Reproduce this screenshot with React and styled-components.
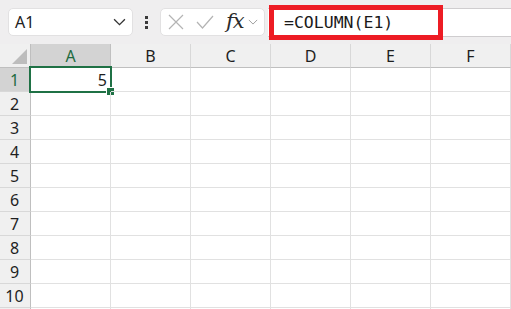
import React from 'react';
import styled, { createGlobalStyle } from 'styled-components';

const GlobalStyle = createGlobalStyle`
  * { box-sizing: border-box; }
  body {
    margin: 0;
    background: #fff;
    font-family: 'Noto Sans', 'Open Sans', sans-serif;
    overflow: hidden;
  }
`;

const Page = styled.div`
  width: 511px;
  height: 309px;
  overflow: hidden;
  display: flex;
  flex-direction: column;
`;

const Toolbar = styled.div`
  height: 44px;
  flex: none;
  background: #efeeef;
  display: flex;
  align-items: center;
  padding-left: 8px;
`;

const NameBox = styled.div`
  width: 125px;
  height: 28px;
  background: #fff;
  border: 1px solid #e2e1e2;
  border-radius: 5px;
  display: flex;
  align-items: center;
  justify-content: space-between;
  padding: 0 6px 0 6px;
  font-size: 16px;
  color: #222;
`;

const Grip = styled.div`
  width: 27px;
  display: flex;
  flex-direction: column;
  align-items: center;
  gap: 2px;
  span {
    width: 3px;
    height: 3px;
    background: #3a3a3a;
  }
`;

const FnBox = styled.div`
  width: 105px;
  height: 28px;
  background: #fff;
  border: 1px solid #e2e1e2;
  border-radius: 5px;
  display: flex;
  align-items: center;
  padding-left: 6px;
`;

const FxLabel = styled.span`
  font-family: 'DejaVu Serif', 'Liberation Serif', serif;
  font-style: italic;
  font-size: 21px;
  color: #2b2b2b;
  margin: 0 4px 2px 11px;
  line-height: 1;
  letter-spacing: -1px;
`;

const FormulaBar = styled.div`
  flex: 1;
  height: 29px;
  margin-left: 3px;
  background: #fff;
  border-top: 1px solid #cfcdcf;
  border-bottom: 1px solid #cfcdcf;
  display: flex;
  align-items: stretch;
`;

const FormulaFrame = styled.div`
  width: 174px;
  margin: -4px 0 -4px 1px;
  border: 5px solid #ed1c24;
  display: flex;
  align-items: center;
  padding-left: 10px;
  font-family: 'DejaVu Sans Mono', 'Liberation Mono', monospace;
  font-size: 16.5px;
  color: #1a1a1a;
`;

const Sheet = styled.div`
  display: grid;
  grid-template-columns: 31px repeat(6, 80px);
  grid-auto-rows: 24px;
  font-size: 16px;
  color: #1e1e1e;
`;

const Corner = styled.div`
  background: #f0f0f0;
  border-right: 1px solid #bfbfbf;
  border-bottom: 1px solid #bfbfbf;
  position: relative;
  &::after {
    content: '';
    position: absolute;
    right: 3px;
    bottom: 3px;
    width: 15px;
    height: 15px;
    background: #bdbdbd;
    clip-path: polygon(100% 0, 100% 100%, 0 100%);
  }
`;

const ColHead = styled.div`
  background: ${(p) => (p.$active ? '#d3d3d3' : '#f0f0f0')};
  color: ${(p) => (p.$active ? '#1d6b40' : '#1e1e1e')};
  border-right: 1px solid ${(p) => (p.$active ? '#c0c0c0' : '#d8d8d8')};
  border-bottom: 1px solid #bfbfbf;
  display: flex;
  align-items: center;
  justify-content: center;
`;

const RowHead = styled.div`
  background: ${(p) => (p.$active ? '#d3d3d3' : '#f0f0f0')};
  color: ${(p) => (p.$active ? '#1d6b40' : '#1e1e1e')};
  border-right: 1px solid #bfbfbf;
  border-bottom: 1px solid #d8d8d8;
  display: flex;
  align-items: center;
  justify-content: center;
  padding-right: 1px;
`;

const Cell = styled.div`
  border-right: 1px solid #e1e1e1;
  border-bottom: 1px solid #e1e1e1;
  display: flex;
  align-items: center;
  justify-content: flex-end;
  padding-right: 3px;
  position: relative;
  ${(p) =>
    p.$selected &&
    `
    &::before {
      content: '';
      position: absolute;
      left: -2px;
      top: -2px;
      right: -2px;
      bottom: -2px;
      border: 2px solid #1f7145;
    }
    &::after {
      content: '';
      position: absolute;
      right: -4px;
      bottom: -4px;
      width: 7px;
      height: 7px;
      background: #1f7145;
      border-top: 1px solid #fff;
      border-left: 1px solid #fff;
    }
  `}
`;

const Chevron = ({ size = 12, color = '#444' }) => (
  <svg width={size} height={size * 0.6} viewBox="0 0 12 7" fill="none">
    <path d="M1 1l5 5 5-5" stroke={color} strokeWidth="1.2" />
  </svg>
);

const CrossIcon = () => (
  <svg width="18" height="18" viewBox="0 0 18 18" fill="none">
    <path d="M2 2l14 14M16 2L2 16" stroke="#b4b4b4" strokeWidth="1.2" />
  </svg>
);

const CheckIcon = () => (
  <svg width="20" height="16" viewBox="0 0 20 16" fill="none" style={{ marginLeft: 10 }}>
    <path d="M2 8l5.5 6L18 2" stroke="#b4b4b4" strokeWidth="1.2" />
  </svg>
);

const cols = ['A', 'B', 'C', 'D', 'E', 'F'];
const rows = Array.from({ length: 11 }, (_, i) => i + 1);

export default function App() {
  return (
    <Page>
      <GlobalStyle />
      <Toolbar>
        <NameBox>
          <span>A1</span>
          <Chevron size={13} color="#333" />
        </NameBox>
        <Grip>
          <span />
          <span />
          <span />
        </Grip>
        <FnBox>
          <CrossIcon />
          <CheckIcon />
          <FxLabel>fx</FxLabel>
          <Chevron size={10} color="#a0a0a0" />
        </FnBox>
        <FormulaBar>
          <FormulaFrame>=COLUMN(E1)</FormulaFrame>
        </FormulaBar>
      </Toolbar>
      <Sheet>
        <Corner />
        {cols.map((c) => (
          <ColHead key={c} $active={c === 'A'}>
            {c}
          </ColHead>
        ))}
        {rows.map((r) => (
          <React.Fragment key={r}>
            <RowHead $active={r === 1}>{r <= 10 ? r : ''}</RowHead>
            {cols.map((c) => (
              <Cell key={c} $selected={r === 1 && c === 'A'}>
                {r === 1 && c === 'A' ? '5' : ''}
              </Cell>
            ))}
          </React.Fragment>
        ))}
      </Sheet>
    </Page>
  );
}
